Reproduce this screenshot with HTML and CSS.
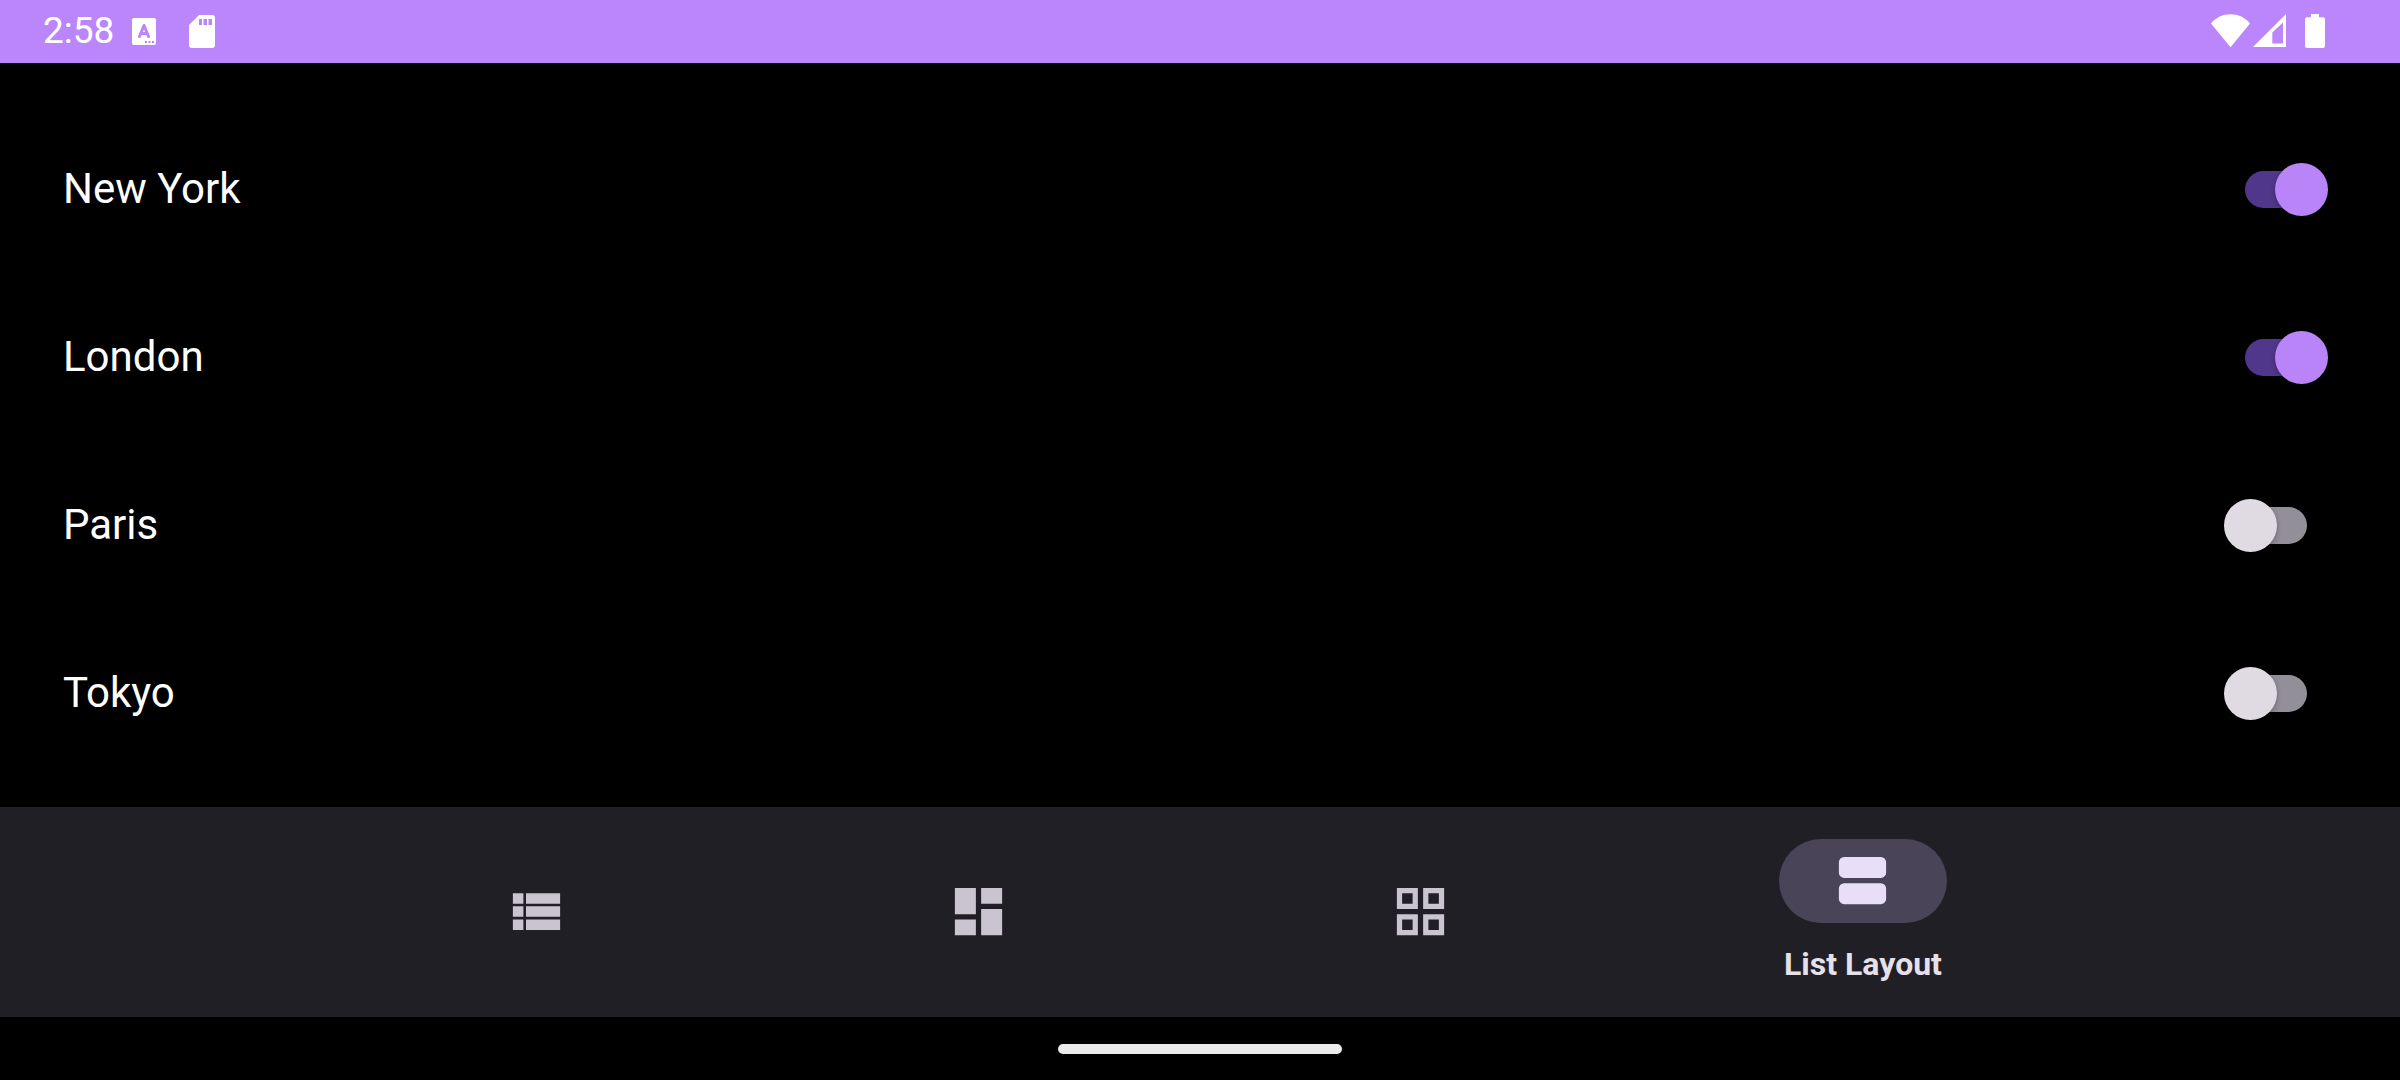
FILE: index.html
```html
<!DOCTYPE html>
<html lang="en">
<head>
<meta charset="utf-8">
<meta name="viewport" content="width=device-width, initial-scale=1">
<title>List Layout</title>
<link rel="stylesheet" href="styles.css">
</head>
<body>
<header class="status-bar">
  <div class="status-group">
    <time class="clock">2:58</time>
    <svg class="status-icon status-icon-input" width="24" height="27" viewBox="0 0 24 27" aria-hidden="true">
      <rect width="24" height="27" rx="2" fill="currentColor"/>
      <path class="cutout-line" d="M7.500 18.500 12 7.500l4.500 11M9 15.500h6"/>
      <path class="cutout" d="M13 23h2v2h-2zM16.500 23h2v2h-2zM20 23h2v2h-2z"/>
    </svg>
    <svg class="status-icon" width="26" height="33" viewBox="0 0 26 33" aria-hidden="true">
      <path fill="currentColor" d="M10 0h13a3 3 0 0 1 3 3v27a3 3 0 0 1-3 3H3a3 3 0 0 1-3-3V10z"/>
      <path class="cutout" d="M10 4h3v6h-3zM14.500 4h3.500v6h-3.500zM19.500 4h3.500v6h-3.500z"/>
    </svg>
  </div>
  <div class="status-group">
    <svg width="39" height="34" viewBox="0 0 39 34" aria-hidden="true">
      <path fill="currentColor" d="M19.500 33.200 0 9.500C5 3.500 12 .3 19.500.3S34 3.500 39 9.500z"/>
    </svg>
    <svg class="signal" width="33" height="34" viewBox="0 0 33 34" aria-hidden="true">
      <path fill="currentColor" fill-rule="evenodd" d="M33 0v33H0zM30 8.500 19.300 18.500V29.500H30z"/>
    </svg>
    <svg class="battery" width="20" height="34" viewBox="0 0 20 34" aria-hidden="true">
      <path fill="currentColor" d="M6 0h8v3.300h4a2 2 0 0 1 2 2V32a2 2 0 0 1-2 2H2a2 2 0 0 1-2-2V5.300a2 2 0 0 1 2-2h4z"/>
    </svg>
  </div>
</header>

<main class="city-list">
  <label class="city"><span>New York</span><input class="switch" type="checkbox" role="switch" checked></label>
  <label class="city"><span>London</span><input class="switch" type="checkbox" role="switch" checked></label>
  <label class="city"><span>Paris</span><input class="switch" type="checkbox" role="switch"></label>
  <label class="city"><span>Tokyo</span><input class="switch" type="checkbox" role="switch"></label>
</main>

<nav class="bottom-nav">
  <button class="nav-item" type="button" aria-label="Rows">
    <svg class="nav-icon" viewBox="0 0 24 24" aria-hidden="true"><path d="M3 14h4v-4H3zM3 19h4v-4H3zM3 9h4V5H3zM8 14h13v-4H8zM8 19h13v-4H8zM8 5v4h13V5z"/></svg>
  </button>
  <button class="nav-item" type="button" aria-label="Dashboard">
    <svg class="nav-icon" viewBox="0 0 24 24" aria-hidden="true"><path d="M3 13h8V3H3zM3 21h8v-6H3zM13 21h8V11h-8zM13 3v6h8V3z"/></svg>
  </button>
  <button class="nav-item" type="button" aria-label="Grid">
    <svg class="nav-icon" viewBox="0 0 24 24" aria-hidden="true"><path fill-rule="evenodd" d="M3 3v8h8V3zM9 9H5V5h4zM3 13v8h8v-8zM9 19H5v-4h4zM13 3v8h8V3zM19 9h-4V5h4zM13 13v8h8v-8zM19 19h-4v-4h4z"/></svg>
  </button>
  <button class="nav-item nav-item-active" type="button" aria-current="page">
    <span class="nav-pill">
      <svg class="nav-icon" viewBox="0 0 24 24" aria-hidden="true"><path d="M19 13H5a2 2 0 0 0-2 2v4a2 2 0 0 0 2 2h14a2 2 0 0 0 2-2v-4a2 2 0 0 0-2-2zM19 3H5a2 2 0 0 0-2 2v4a2 2 0 0 0 2 2h14a2 2 0 0 0 2-2V5a2 2 0 0 0-2-2z"/></svg>
    </span>
    <span class="nav-label">List Layout</span>
  </button>
</nav>

<footer class="gesture-bar"><div class="gesture-handle"></div></footer>
</body>
</html>
```
FILE: styles.css
```css
* {
  box-sizing: border-box;
}

body {
  margin: 0;
  min-height: 100vh;
  display: flex;
  flex-direction: column;
  background: #000;
  color: #fff;
  font-family: Roboto, "Liberation Sans", sans-serif;
}

svg {
  display: block;
}

/* Status bar */
.status-bar {
  display: flex;
  justify-content: space-between;
  height: 63px;
  padding: 0 75px 1px 43px;
  background: #bb86fc;
}

.status-group {
  display: flex;
  align-items: center;
}

.clock {
  font-size: 37px;
  line-height: 44px;
}

.status-icon {
  margin-left: 33px;
}

.status-icon-input {
  margin-left: 18px;
}

.cutout {
  fill: #bb86fc;
}

.cutout-line {
  fill: none;
  stroke: #bb86fc;
  stroke-width: 3;
  stroke-linejoin: round;
  stroke-linecap: round;
}

.signal {
  margin-left: 3px;
}

.battery {
  margin-left: 19px;
}

/* City list */
.city-list {
  flex: 1;
  padding: 42px 72px 30px 63px;
}

.city {
  display: flex;
  align-items: center;
  justify-content: space-between;
  height: 168px;
  font-size: 42px;
  line-height: 50px;
}

.switch {
  appearance: none;
  display: grid;
  align-items: center;
  width: 104px;
  height: 53px;
  margin: 0;
}

.switch::before,
.switch::after {
  content: "";
  grid-area: 1 / 1;
}

.switch::before {
  justify-self: center;
  width: 62px;
  height: 37px;
  border-radius: 19px;
  background: #938f99;
}

.switch::after {
  justify-self: start;
  width: 53px;
  height: 53px;
  border-radius: 50%;
  background: #e0dbe2;
  box-shadow: 0 2px 5px rgba(0, 0, 0, 0.3);
}

.switch:checked::before {
  background: #50378b;
}

.switch:checked::after {
  justify-self: end;
  background: #b884f8;
}

/* Bottom navigation */
.bottom-nav {
  display: flex;
  justify-content: center;
  height: 210px;
  background: #211f26;
}

.nav-item {
  display: flex;
  flex: 0 1 442px;
  flex-direction: column;
  align-items: center;
  justify-content: center;
  gap: 20px;
  padding: 0;
  border: 0;
  background: none;
  color: #cac4d0;
  font: inherit;
}

.nav-item-active {
  color: #e8def8;
}

.nav-icon {
  width: 64px;
  height: 64px;
  padding: 0 1px 1px 0;
  fill: currentColor;
}

.nav-pill {
  display: flex;
  align-items: center;
  justify-content: center;
  width: 168px;
  height: 84px;
  border-radius: 42px;
  background: #4a4458;
}

.nav-label {
  color: #e6e0e9;
  font-size: 32px;
  font-weight: 700;
  line-height: 42px;
}

/* Gesture bar */
.gesture-bar {
  display: flex;
  align-items: center;
  justify-content: center;
  height: 63px;
}

.gesture-handle {
  width: 284px;
  height: 10px;
  border-radius: 5px;
  background: #ebebeb;
}
```
